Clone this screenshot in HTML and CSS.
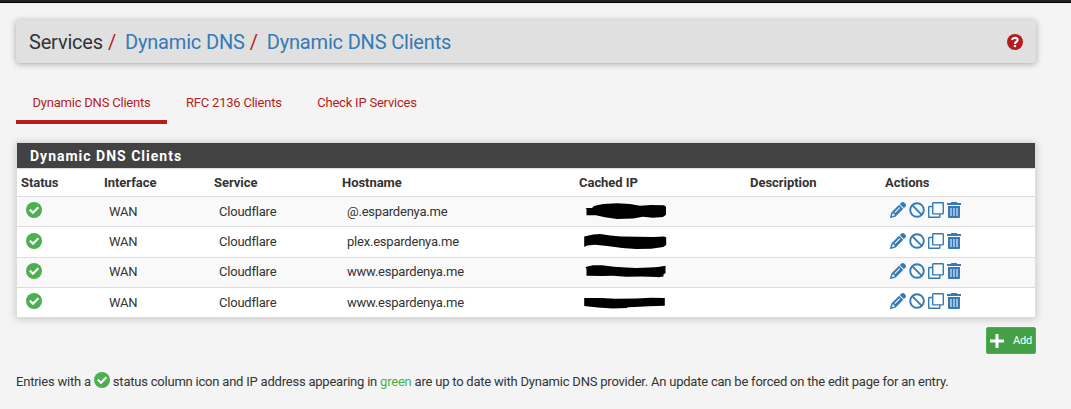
FILE: index.html
```
<!DOCTYPE html>
<html lang="en">
<head>
<meta charset="utf-8">
<title>Services: Dynamic DNS Clients</title>
<link rel="stylesheet" href="styles.css">
</head>
<body>
<svg class="sprite" aria-hidden="true">
  <symbol id="check" viewBox="0 0 16 16"><circle cx="8" cy="8" r="8" fill="currentColor"/><path fill="none" stroke="#fff" stroke-width="2.200" stroke-linecap="square" d="M4.600 8.400L7 10.700l4.600-4.600"/></symbol>
  <symbol id="question" viewBox="0 0 16 16"><circle cx="8" cy="8" r="8" fill="currentColor"/><path fill="none" stroke="#fff" stroke-width="2.100" d="M4.900 5.800C5.400 4.400 6.500 3.900 8 3.900c1.600 0 2.700.8 2.700 2.100C10.700 7.700 8 7.700 8 9.900"/><path fill="#fff" d="M6.800 10.900h2.300v2.200H6.800z"/></symbol>
  <symbol id="pencil" viewBox="0 0 512 512"><path fill="currentColor" fill-rule="evenodd" d="M410.300 231l11.300-11.300-33.900-33.900-62.100-62.100L291.700 89.800l-11.300 11.300-22.600 22.600L58.600 322.900c-10.400 10.400-18 23.300-22.200 37.400L1 480.700c-2.500 8.400-.2 17.500 6.100 23.700s15.300 8.500 23.700 6.100l120.300-35.400c14.100-4.200 27-11.800 37.400-22.200L387.700 253.700zM160 399.400l-9.100 22.700c-4 3.100-8.500 5.400-13.300 6.900L59.400 452l23-78.100c1.400-4.900 3.800-9.400 6.900-13.300l22.700-9.100v32c0 8.800 7.200 16 16 16zM362.700 18.700L348.300 33.200 325.700 55.800 314.300 67.100l33.900 33.900 62.100 62.100 33.900 33.900 11.300-11.300 22.600-22.600 14.500-14.500c25-25 25-65.500 0-90.500L453.300 18.700c-25-25-65.500-25-90.500 0zM315.700 196.700l-144 144c-6.200 6.200-16.400 6.200-22.600 0s-6.200-16.400 0-22.600l144-144c6.200-6.200 16.400-6.200 22.600 0s6.200 16.400 0 22.600z"/></symbol>
  <symbol id="ban" viewBox="0 0 16 16"><g fill="none" stroke="currentColor" stroke-width="1.900"><circle cx="8" cy="8" r="6.800"/><path d="M3.200 3.200l9.600 9.600"/></g></symbol>
  <symbol id="clone" viewBox="0 0 16 16"><g fill="none" stroke="currentColor" stroke-width="1.400" stroke-linejoin="round"><rect x="4.700" y=".7" width="10.600" height="11.200" rx=".6"/><path d="M4.500 4.500H1.200q-.5 0-.5.500v9.800q0 .5.500.5h10q.6 0 .6-.5V12"/></g></symbol>
  <symbol id="trash" viewBox="0 0 14 16"><path fill="currentColor" fill-rule="evenodd" d="M4.500 0h5l1 1H14v2H0V1h3.500zM1 4h12v11q0 1-1 1H2q-1 0-1-1zm2.500 2v8h1V6zm3 0v8h1V6zm3 0v8h1V6z"/></symbol>
  <symbol id="plus" viewBox="0 0 14 14"><path fill="none" stroke="currentColor" stroke-width="3" stroke-linecap="butt" d="M7 0v14M0 7h14"/></symbol>
</svg>
<div class="navbar"></div>
<main class="container">
  <header class="page-header">
    <nav class="breadcrumb"><span>Services</span><i class="sep">/</i><a>Dynamic DNS</a><i class="sep">/</i><a>Dynamic DNS Clients</a></nav>
    <svg class="icon help"><use href="#question"/></svg>
  </header>
  <nav class="tabs">
    <a class="tab active">Dynamic DNS Clients</a>
    <a class="tab">RFC 2136 Clients</a>
    <a class="tab">Check IP Services</a>
  </nav>
  <section class="panel">
    <h2 class="panel-title">Dynamic DNS Clients</h2>
    <div class="row head"><span>Status</span><span>Interface</span><span>Service</span><span>Hostname</span><span>Cached IP</span><span>Description</span><span>Actions</span></div>
    <div class="row odd">
      <span><svg class="icon ok"><use href="#check"/></svg></span><span>WAN</span><span>Cloudflare</span><span>@.espardenya.me</span>
      <span><svg class="redaction" viewBox="0 0 84 18"><path d="M1.500 5H8l2-2 9-2 14-.8 13 .8 10 1.800 11-.8 13 .3 2 1.500v8l-3 2.200-10 .8-10-1-10 1.800-16 .4-12-1.700-9-2H2.500V6z"/></svg></span><span></span>
      <span class="actions"><svg class="icon"><use href="#pencil"/></svg><svg class="icon"><use href="#ban"/></svg><svg class="icon"><use href="#clone"/></svg><svg class="icon bin"><use href="#trash"/></svg></span>
    </div>
    <div class="row tall">
      <span><svg class="icon ok"><use href="#check"/></svg></span><span>WAN</span><span>Cloudflare</span><span>plex.espardenya.me</span>
      <span><svg class="redaction" viewBox="0 0 84 18"><path d="M.2 3.500l9-2 7-.5 10 1.500 11 1 17 .2 15 .3 11-.6 2 1v7.600l-3 2-12 1.700-15 .3-14-1-15-2-12-1.300-8 .8-3 1.500z"/></svg></span><span></span>
      <span class="actions"><svg class="icon"><use href="#pencil"/></svg><svg class="icon"><use href="#ban"/></svg><svg class="icon"><use href="#clone"/></svg><svg class="icon bin"><use href="#trash"/></svg></span>
    </div>
    <div class="row odd third">
      <span><svg class="icon ok"><use href="#check"/></svg></span><span>WAN</span><span>Cloudflare</span><span>www.espardenya.me</span>
      <span><svg class="redaction" viewBox="0 0 84 18"><path d="M1.500 3L9 1.300h9l12 1.500 12 .7 10 .5 14-.5 8-.4 7.500-1.300v7.400l-2 1v2.200l-5 .8-2-.3-15-.3-15 .2-14-1-10 .3-16-.3V5z"/></svg></span><span></span>
      <span class="actions"><svg class="icon"><use href="#pencil"/></svg><svg class="icon"><use href="#ban"/></svg><svg class="icon"><use href="#clone"/></svg><svg class="icon bin"><use href="#trash"/></svg></span>
    </div>
    <div class="row last">
      <span><svg class="icon ok"><use href="#check"/></svg></span><span>WAN</span><span>Cloudflare</span><span>www.espardenya.me</span>
      <span><svg class="redaction" viewBox="0 0 84 18"><path d="M.2 4h17l14 .7L52 4.500l15-.7 13.800.3v7.600l-16 .5-14 .8-7 .2-1 .8-14 .5-15-1L.2 12z"/></svg></span><span></span>
      <span class="actions"><svg class="icon"><use href="#pencil"/></svg><svg class="icon"><use href="#ban"/></svg><svg class="icon"><use href="#clone"/></svg><svg class="icon bin"><use href="#trash"/></svg></span>
    </div>
  </section>
  <div class="toolbar"><a class="add"><svg class="plus"><use href="#plus"/></svg><span>Add</span></a></div>
  <p class="note"><span>Entries with a</span><svg class="icon ok"><use href="#check"/></svg><span>status column icon and IP address appearing in <b class="green">green</b> are up to date with Dynamic DNS provider. An update can be forced on the edit page for an entry.</span></p>
</main>
</body>
</html>
```

FILE: styles.css
```
* { box-sizing: border-box; }
body {
  margin: 0;
  height: 409px;
  overflow: hidden;
  background: #f4f4f4;
  color: #333;
  font: 13px/18px Roboto, sans-serif;
  letter-spacing: -.215px;
}
.sprite { display: none; }
.navbar { height: 3px; background: #212121; border-bottom: 1px solid #000; }
.container { width: 1020px; margin-left: 16px; padding-top: 17px; }
.icon { display: block; flex: none; width: 16px; height: 16px; }
.ok { color: #4caf50; }

.page-header {
  display: flex;
  justify-content: space-between;
  align-items: center;
  height: 43px;
  padding: 0 13px;
  background: #e0e0e0;
  border-radius: 3px;
  box-shadow: 0 1px 6px rgba(0, 0, 0, .32);
}
.breadcrumb { display: flex; font-size: 20px; line-height: 24px; padding-top: 1px; letter-spacing: -.18px; }
.breadcrumb a { color: #337ab7; }
.sep { font-style: normal; color: #b71c1c; margin: 0 9px 0 5px; }
.help { color: #b71c1c; }

.tabs { display: flex; gap: 3px; height: 42px; margin-top: 19px; }
.tab { padding: 12px 16px 0 16.500px; color: #b71c1c; }
.tab.active { border-bottom: 4px solid #b71c1c; }

.panel {
  margin-top: 18px;
  background: #fff;
  border: 1px solid #ddd;
  box-shadow: 0 1px 8px rgba(0, 0, 0, .2);
}
.panel-title {
  margin: 0;
  height: 25px;
  padding: 1px 13px 0;
  background: #424242;
  color: #fff;
  font-size: 14px;
  line-height: 25px;
  font-weight: 700;
  letter-spacing: 1px;
}
.row {
  display: grid;
  grid-template-columns: 83px 110px 128px 237px 171px 135px 1fr;
  height: 30px;
  padding-left: 9px;
  border-top: 1px solid #ddd;
  line-height: 29px;
}
.row.head { height: 28px; padding-left: 4px; font-weight: 700; line-height: 28px; letter-spacing: -.04px; }
.row.odd { background: #f9f9f9; }
.row.tall { height: 31px; }
.row.third { line-height: 28px; }
.row.last { line-height: 30px; }
.row .icon { margin-top: 5px; }
.tall .icon { margin-top: 6px; }
.actions { display: flex; gap: 3px; color: #337ab7; }
.icon.bin { width: 14px; }
.redaction { display: block; width: 84px; height: 18px; margin-top: 6px; }

.toolbar { display: flex; justify-content: flex-end; margin-top: 9px; }
.add {
  display: flex;
  align-items: center;
  gap: 9px;
  width: 50px;
  height: 27px;
  padding-left: 3px;
  background: #43a047;
  border: 1px solid #4caf50;
  border-radius: 2px;
  color: #fff;
  font-size: 11px;
}
.plus { width: 14px; height: 14px; }
.note { display: flex; align-items: flex-start; gap: 3px; margin: 18px 0 0; line-height: 20px; white-space: nowrap; }
.green { color: #4caf50; font-weight: 400; }
```
